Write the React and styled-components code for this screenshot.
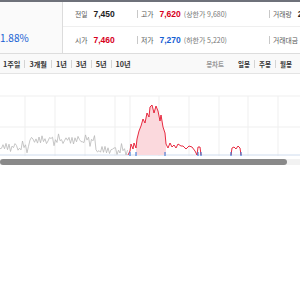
import React from "react";
import styled, { createGlobalStyle } from "styled-components";

const GlobalStyle = createGlobalStyle`
  body {
    margin: 0;
    background: #ffffff;
    font-family: "Noto Sans CJK KR", "Noto Sans", sans-serif;
  }
`;

const TopStrip = styled.div`
  height: 2px;
  background: #6e717a;
`;

const InfoRow = styled.div`
  display: flex;
  height: 51px;
  border-bottom: 1px solid #dddddd;
`;

const PricePanel = styled.div`
  width: 63px;
  background: #fafafa;
  border-right: 1px solid #dcdcdc;
  display: flex;
  align-items: flex-start;
  padding-top: 30px;
  box-sizing: border-box;
  overflow: hidden;
`;

const Rate = styled.span`
  font-size: 10px;
  color: #1660d3;
  line-height: 12px;
  white-space: nowrap;
`;

const Table = styled.div`
  flex: 1;
  display: flex;
  flex-direction: column;
  overflow: hidden;
`;

const Row = styled.div`
  display: grid;
  grid-template-columns: 74px 132px 1fr;
  align-items: center;
  height: ${(p) => (p.$first ? "24px" : "26px")};
  border-bottom: ${(p) => (p.$first ? "1px solid #efefef" : "none")};
`;

const Cell = styled.div`
  display: flex;
  align-items: center;
  white-space: nowrap;
  padding-left: ${(p) => (p.$sep ? "4px" : "12px")};
  position: relative;
  &::before {
    content: "";
    display: ${(p) => (p.$sep ? "block" : "none")};
    position: absolute;
    left: 0;
    top: 50%;
    height: 8px;
    margin-top: -4px;
    border-left: 1px solid #c8c8c8;
  }
`;

const Label = styled.span`
  font-size: 6.8px;
  color: #555555;
  margin-right: 6px;
`;

const Value = styled.span`
  font-size: 8.5px;
  font-weight: 700;
  color: ${(p) => p.$color || "#222222"};
  font-family: "Liberation Sans", "Noto Sans", sans-serif;
`;

const Note = styled.span`
  font-size: 7px;
  color: #777777;
  margin-left: 3px;
`;

const TabBar = styled.div`
  display: flex;
  justify-content: space-between;
  align-items: center;
  height: 19px;
  background: #f9f9f9;
  border-bottom: 1px solid #e4e4e4;
  padding: 0 4px 0 3px;
`;

const TabGroup = styled.div`
  display: flex;
  align-items: center;
`;

const Tab = styled.span`
  font-size: ${(p) => p.$size || "7.2px"};
  font-weight: 700;
  color: ${(p) => (p.$muted ? "#9a9a9a" : "#333333")};
  padding: 0 4px;
  line-height: 8px;
  white-space: nowrap;
  border-left: ${(p) => (p.$sep ? "1px solid #d4d4d4" : "none")};
  margin-right: ${(p) => (p.$gap ? "6px" : "0")};
  &:first-child {
    padding-left: 0;
  }
`;

const ChartWrap = styled.div`
  height: 84px;
`;

const ScrollTrack = styled.div`
  margin-top: 1px;
  height: 6px;
  background: #f2f2f2;
`;

const ScrollThumb = styled.div`
  width: 287px;
  height: 6px;
  border-radius: 3px;
  background: #898989;
`;

const T = 73;

const grayPts = [];
for (let x = 0; x <= 128; x += 1.5) {
  const base = x < 30 ? 146 : x < 95 ? 139 : 149;
  const y =
    base +
    3.2 * Math.sin(x * 1.9) +
    2 * Math.sin(x * 0.7 + 1) +
    1.4 * Math.sin(x * 3.3);
  grayPts.push([x, Math.min(154, y)]);
}

const redMain = [
  [128, 154], [130, 150], [131, 143], [133, 148], [134, 142], [136, 147],
  [137, 138], [139, 130], [141, 125], [143, 118], [145, 122], [147, 112],
  [149, 116], [150, 106], [152, 104], [154, 112], [156, 105], [158, 110],
  [160, 120], [161, 114], [163, 126], [165, 132], [166, 143], [168, 147],
  [170, 142], [172, 146], [174, 144], [176, 147], [178, 143], [181, 145],
  [183, 145], [186, 148], [189, 145], [192, 146], [195, 150], [197, 154],
  [198, 146], [200, 146], [201, 154],
];

const redBump = [
  [231, 154], [232, 147], [234, 146], [236, 148], [238, 145], [240, 147], [241, 154],
];

const toPath = (pts) =>
  pts.map(([x, y], i) => `${i ? "L" : "M"}${x} ${(y - T).toFixed(1)}`).join(" ");

const fillPts = redMain.filter(([x]) => x >= 136 && x <= 166);
const fillPath = toPath([[136, 154], ...fillPts, [166, 154]]) + " Z";

const vLines = [25, 55, 85, 115, 130, 159, 189, 219, 248, 278];
const hLines = [95, 126];
const ticks = [130, 136, 165, 198, 201, 231, 241];

function Chart() {
  return (
    <svg width="300" height="84" viewBox="0 0 300 84">
      {vLines.map((x) => (
        <line key={x} x1={x} y1={95 - T} x2={x} y2={155 - T} stroke="#efefef" strokeWidth="1" />
      ))}
      {hLines.map((y) => (
        <line key={y} x1="0" y1={y - T} x2="300" y2={y - T} stroke="#efefef" strokeWidth="1" />
      ))}
      <line x1="0" y1={154 - T} x2="300" y2={154 - T} stroke="#cfdcee" strokeWidth="1" />
      <path d={fillPath} fill="#fbd9dd" />
      <path d={toPath(grayPts)} fill="none" stroke="#b8b8b8" strokeWidth="0.8" />
      <path d={toPath(redMain)} fill="none" stroke="#e4142c" strokeWidth="0.9" />
      <path d={toPath(redBump)} fill="none" stroke="#e4142c" strokeWidth="0.9" />
      {ticks.map((x) => (
        <line key={x} x1={x} y1={151 - T} x2={x} y2={155 - T} stroke="#2a6fd6" strokeWidth="1" />
      ))}
    </svg>
  );
}

export default function App() {
  return (
    <>
      <GlobalStyle />
      <TopStrip />
      <InfoRow>
        <PricePanel>
          <Rate>1.88%</Rate>
        </PricePanel>
        <Table>
          <Row $first>
            <Cell>
              <Label>전일</Label>
              <Value>7,450</Value>
            </Cell>
            <Cell $sep>
              <Label>고가</Label>
              <Value $color="#d7001c">7,620</Value>
              <Note>(상한가 9,680)</Note>
            </Cell>
            <Cell $sep>
              <Label>거래량</Label>
              <Value>2</Value>
            </Cell>
          </Row>
          <Row>
            <Cell>
              <Label>시가</Label>
              <Value $color="#d7001c">7,460</Value>
            </Cell>
            <Cell $sep>
              <Label>저가</Label>
              <Value $color="#1660d3">7,270</Value>
              <Note>(하한가 5,220)</Note>
            </Cell>
            <Cell $sep>
              <Label>거래대금</Label>
            </Cell>
          </Row>
        </Table>
      </InfoRow>
      <TabBar>
        <TabGroup>
          <Tab>1주일</Tab>
          <Tab $sep>3개월</Tab>
          <Tab $sep>1년</Tab>
          <Tab $sep>3년</Tab>
          <Tab $sep>5년</Tab>
          <Tab $sep>10년</Tab>
        </TabGroup>
        <TabGroup>
          <Tab $size="6.5px" $muted $gap>봉차트</Tab>
          <Tab $size="6.5px">일봉</Tab>
          <Tab $size="6.5px" $sep>주봉</Tab>
          <Tab $size="6.5px" $sep>월봉</Tab>
        </TabGroup>
      </TabBar>
      <ChartWrap>
        <Chart />
      </ChartWrap>
      <ScrollTrack>
        <ScrollThumb />
      </ScrollTrack>
    </>
  );
}
